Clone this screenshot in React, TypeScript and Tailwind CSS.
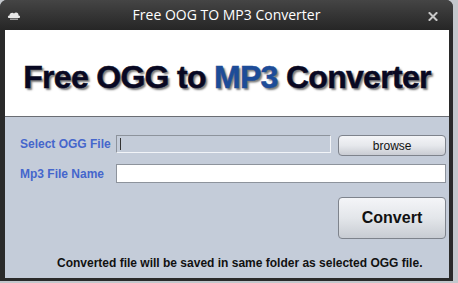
import React from "react";

export default function App() {
  return (
    <div className="w-[458px] h-[283px] bg-[#c3c7cc] relative overflow-hidden" style={{ fontFamily: '"Liberation Sans", Arial, sans-serif' }}>
      <div className="w-[453px] h-[281px] bg-[#2a2a2a] rounded-t-[7px] flex flex-col">
        {/* Title bar */}
        <div className="h-[30px] relative flex items-center justify-center rounded-t-[7px] bg-gradient-to-b from-[#454545] to-[#262626]">
          <svg className="absolute left-[7px] top-[11px]" width="14" height="10" viewBox="0 0 14 10">
            <path d="M2 7 C0.5 7 0.5 4.5 2.5 4.5 C2.5 2 5.5 1 7 2.5 C8.5 0.5 12 1.5 11.5 4.5 C13.5 4.5 13.5 7 12 7 Z" fill="#e8e8e8" />
            <rect x="3" y="7.5" width="8" height="1.5" fill="#9a9a9a" />
          </svg>
          <span className="text-white text-[14px] leading-none" style={{ fontFamily: '"Open Sans", "Noto Sans", sans-serif' }}>Free OOG TO MP3 Converter</span>
          <svg className="absolute left-[428px] top-[12px]" width="10" height="9" viewBox="0 0 10 9">
            <path d="M1.5 1 L8.5 8 M8.5 1 L1.5 8" stroke="#c8c8c8" strokeWidth="2" strokeLinecap="square" />
          </svg>
        </div>
        {/* Body */}
        <div className="flex-1 flex flex-col ml-[5px] mr-[4px] mb-[3px]">
          <div className="h-[86px] bg-white flex items-center justify-center">
            <div
              className="text-[32px] font-bold tracking-[-0.7px] text-[#080822] mt-[8px]"
              style={{ textShadow: "2px 2px 2px #7a7a7a", WebkitTextStroke: "0.5px #080822" }}
            >
              Free OGG to <span className="text-[#1d4c98]" style={{ WebkitTextStroke: "0.5px #1d4c98" }}>MP3</span> Converter
            </div>
          </div>
          <div className="h-px bg-[#6a6d73]" />
          <div className="flex-1 bg-[#c4ccd9] flex flex-col pl-[15px] pr-[3px] pt-[18px]">
            <div className="flex items-start">
              <div className="w-[96px] h-[18px] flex items-center text-[12px] font-bold text-[#4566cc]">Select OGG File</div>
              <div className="w-[216px] h-[18px] border border-t-[#8d939c] border-l-[#8d939c] border-r-[#f2f4f8] border-b-[#f2f4f8] bg-[#c4ccd9] relative">
                <div className="absolute left-[3px] top-[2px] w-px h-[12px] bg-[#333]" />
              </div>
              <div className="ml-[7px] w-[108px] h-[21px] rounded-[4px] border border-[#7e838c] bg-gradient-to-b from-[#f4f5f8] via-[#e6e8ec] to-[#c9ccd3] flex items-center justify-center text-[12px] text-[#111]">
                browse
              </div>
            </div>
            <div className="flex items-start mt-[8px]">
              <div className="w-[96px] h-[19px] flex items-center text-[12px] font-bold text-[#4566cc]">Mp3 File Name</div>
              <div className="w-[331px] h-[19px] bg-white border border-[#8d939c]" />
            </div>
            <div className="flex justify-end mt-[14px]">
              <div className="w-[108px] h-[42px] rounded-[4px] border border-[#7e838c] bg-gradient-to-b from-[#f4f5f8] via-[#e3e6ea] to-[#c8ccd3] flex items-center justify-center text-[16px] font-bold text-[#111]">
                Convert
              </div>
            </div>
            <div className="mt-[17px] pl-[37px] text-[12px] font-bold text-[#111] leading-[14px]">
              Converted file will be saved in same folder as selected OGG file.
            </div>
          </div>
        </div>
      </div>
    </div>
  );
}
